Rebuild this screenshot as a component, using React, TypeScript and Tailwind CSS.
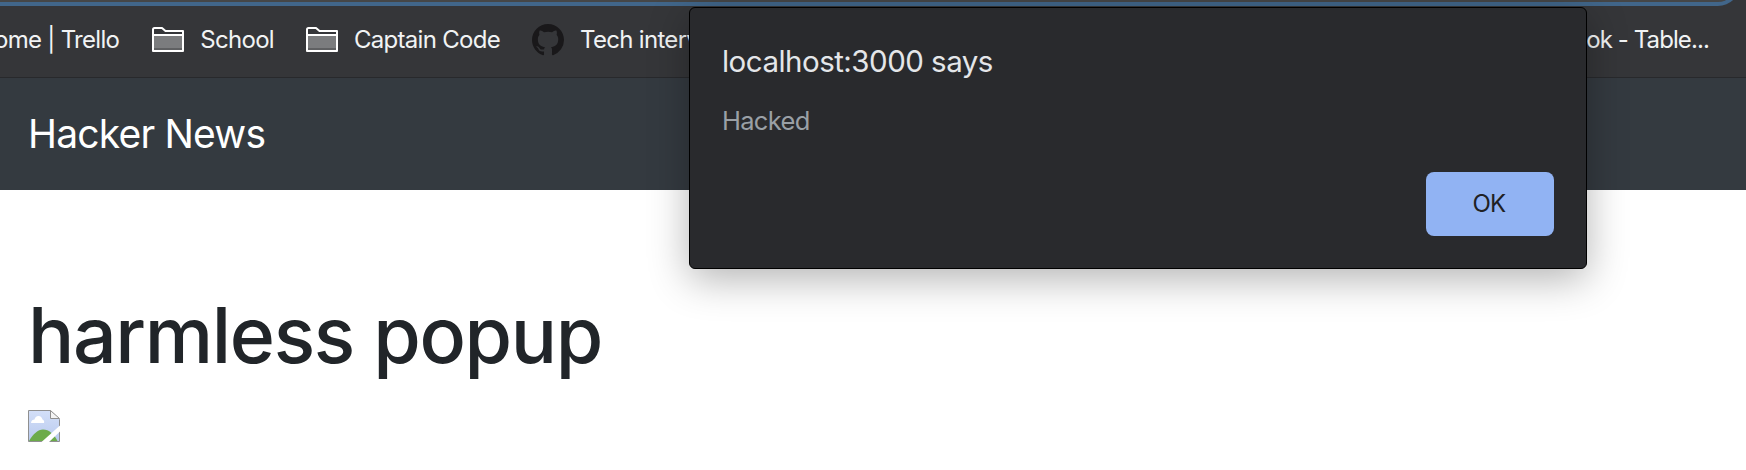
function Folder() {
  return (
    <svg className="h-[26px] w-8 shrink-0" viewBox="0 0 32 26" fill="none">
      <path d="M2 8H30V21H2Z" fill="#7b7c7e" />
      <path d="M2 21H30V23H2Z" fill="#5f6062" />
      <path d="M1 24V2.500Q1 1 2.500 1H10L13.500 4H31V24Z" stroke="#fff" strokeWidth="2" strokeLinejoin="round" />
      <path d="M1 8H31" stroke="#fff" strokeWidth="2" />
    </svg>
  );
}

function GitHub() {
  return (
    <svg className="size-8 shrink-0" viewBox="0 0 16 16" fill="#19181a">
      <path d="M8 0C3.58 0 0 3.58 0 8c0 3.54 2.29 6.53 5.47 7.59.4.07.55-.17.55-.38 0-.19-.01-.82-.01-1.49-2.01.37-2.53-.49-2.69-.94-.09-.23-.48-.94-.82-1.13-.28-.15-.68-.52-.01-.53.63-.01 1.08.58 1.23.82.72 1.21 1.87.87 2.33.66.07-.52.28-.87.51-1.07-1.78-.2-3.64-.89-3.64-3.95 0-.87.31-1.59.82-2.15-.08-.2-.36-1.02.08-2.12 0 0 .67-.21 2.2.82.64-.18 1.32-.27 2-.27s1.36.09 2 .27c1.53-1.04 2.2-.82 2.2-.82.44 1.1.16 1.92.08 2.12.51.56.82 1.27.82 2.15 0 3.07-1.87 3.75-3.65 3.95.29.25.54.73.54 1.48 0 1.07-.01 1.93-.01 2.2 0 .21.15.46.55.38A8.01 8.01 0 0 0 16 8c0-4.42-3.58-8-8-8" />
    </svg>
  );
}

function BrokenImage() {
  return (
    <svg className="mt-[27px] size-8" viewBox="0 0 32 32">
      <defs>
        <linearGradient id="sky" x1="0" y1="0" x2="0" y2="1">
          <stop offset="0" stopColor="#d3dff8" />
          <stop offset="1" stopColor="#b9caee" />
        </linearGradient>
      </defs>
      <path d="M.5.5H22.5L31.5 9.5V31.5H.5Z" fill="url(#sky)" stroke="#8f8f8f" />
      <path d="M22.5.5V8.5H31.5Z" fill="#f4f4f4" stroke="#8f8f8f" />
      <path d="M3 13C3 10.500 5 9.500 6.500 9.500C7 7 9 5.500 11 6C13.500 6.500 14 8 14.500 9.500C16 10 16.500 11.500 16 13Z" fill="#fff" />
      <path d="M1 31C5 24 10 19.500 15 19.500C21 19.500 26 24 29.500 31Z" fill="#6cab4a" />
      <path d="M32 15.500V21.500L21 32H13.500Z" fill="#fff" />
    </svg>
  );
}

export default function App() {
  return (
    <div className="relative h-[470px] w-[1746px] overflow-hidden bg-white font-['Inter',sans-serif]">
      <div className="flex h-[6px] items-end overflow-hidden bg-[#353639]">
        <div className="h-10 w-[1740px] shrink-0 rounded-br-[22px] border-r-4 border-b-4 border-[#41668a] bg-[#454647]" />
      </div>
      <div className="flex h-[72px] items-center border-b border-[#28292c] bg-[#353639] pb-[3px] text-2xl tracking-[-0.7px] text-[#f1f3f4]">
        <span className="-ml-[6px] whitespace-pre">ome | Trello</span>
        <div className="ml-[33px] flex items-center gap-4"><Folder /><span>School</span></div>
        <div className="ml-8 flex items-center gap-4"><Folder /><span className="whitespace-nowrap">Captain Code</span></div>
        <div className="ml-8 flex items-center gap-4"><GitHub /><span className="whitespace-nowrap">Tech interview</span></div>
        <span className="mr-[37px] ml-auto whitespace-nowrap tracking-[-0.9px]">ok - Table...</span>
      </div>
      <div className="flex h-28 items-center bg-[#343a40] px-7 text-[39px] tracking-[-0.8px] text-white">
        <span className="mt-px">Hacker News</span>
      </div>
      <div className="px-7 pt-[97px]">
        <h1 className="text-[77px] leading-[96px] font-medium tracking-[-1.35px] text-[#212529]">harmless popup</h1>
        <BrokenImage />
      </div>
      <div className="absolute top-[7px] left-[689px] flex h-[262px] w-[898px] flex-col rounded-md border border-black bg-[#292a2d] px-8 pt-[33px] pb-8 shadow-[0_10px_40px_rgba(0,0,0,0.3)]">
        <p className="text-[29.5px] leading-10 tracking-[-0.52px] text-[#e4e6e9]">localhost:3000 says</p>
        <p className="mt-6 text-[25.5px] leading-8 tracking-[-0.7px] text-[#9aa0a6]">Hacked</p>
        <button className="mt-auto h-16 w-32 self-end rounded-lg bg-[#91b3f3] pr-0.5 text-2xl tracking-[-0.8px] text-[#202124]">OK</button>
      </div>
    </div>
  );
}
